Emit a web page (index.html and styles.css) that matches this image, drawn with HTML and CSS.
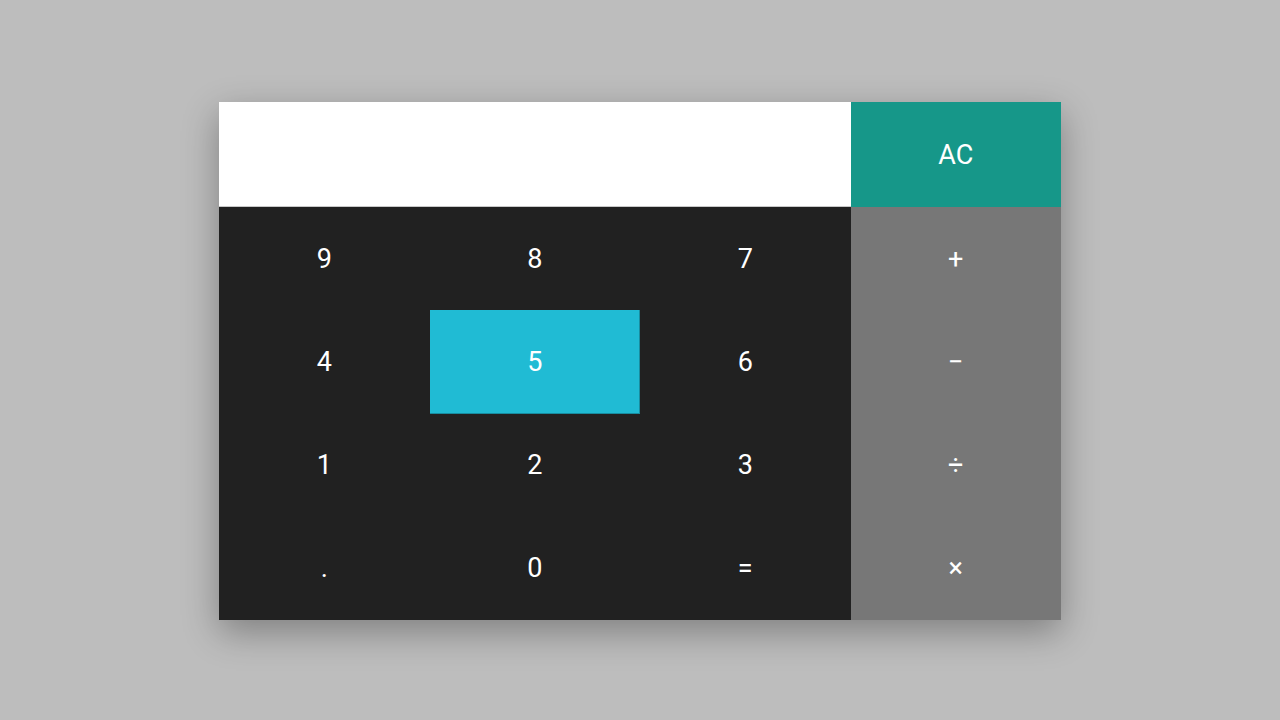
FILE: index.html
```html
<!DOCTYPE html>
<html lang="en">
<head>
<meta charset="utf-8">
<title>Calculator</title>
<link rel="stylesheet" href="styles.css">
</head>
<body>
<main class="calc">
  <div class="display"></div>
  <button class="key key-clear">AC</button>
  <button class="key key-num">9</button>
  <button class="key key-num">8</button>
  <button class="key key-num">7</button>
  <button class="key key-op">+</button>
  <button class="key key-num">4</button>
  <button class="key key-num key-active">5</button>
  <button class="key key-num">6</button>
  <button class="key key-op">−</button>
  <button class="key key-num">1</button>
  <button class="key key-num">2</button>
  <button class="key key-num">3</button>
  <button class="key key-op">÷</button>
  <button class="key key-num">.</button>
  <button class="key key-num">0</button>
  <button class="key key-num">=</button>
  <button class="key key-op">×</button>
</main>
</body>
</html>
```
FILE: styles.css
```css
html, body {
  margin: 0;
  padding: 0;
  height: 100%;
}
body {
  background: #bdbdbd;
  display: flex;
  align-items: center;
  justify-content: center;
  font-family: Roboto, "Noto Sans", sans-serif;
}
.calc {
  width: 842px;
  height: 518px;
  margin-top: 2px;
  display: grid;
  grid-template-columns: repeat(4, 1fr);
  grid-template-rows: 105px repeat(4, 1fr);
  box-shadow: 0 12px 34px rgba(0, 0, 0, 0.32);
  background: #212121;
}
.display {
  grid-column: 1 / 4;
  background: #ffffff;
  border-bottom: 1px solid #c8c8c8;
}
.key {
  border: 0;
  margin: 0;
  padding: 0;
  font-family: Roboto, "Noto Sans", sans-serif;
  font-size: 27px;
  font-weight: 400;
  color: #ffffff;
  display: flex;
  align-items: center;
  justify-content: center;
}
.key-clear {
  background: #169789;
}
.key-num {
  background: #212121;
}
.key-active {
  background: #20bbd4;
  box-shadow: inset -1px -1px 0 rgba(0, 0, 0, 0.25);
}
.key-op {
  background: #777777;
}
```
